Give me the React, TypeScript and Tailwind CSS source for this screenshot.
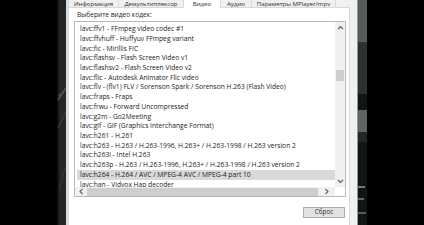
import React from 'react';

const codecs = [
  'lavc:ffv1 - FFmpeg video codec #1',
  'lavc:ffvhuff - Huffyuv FFmpeg variant',
  'lavc:fic - Mirillis FIC',
  'lavc:flashsv - Flash Screen Video v1',
  'lavc:flashsv2 - Flash Screen Video v2',
  'lavc:flic - Autodesk Animator Flic video',
  'lavc:flv - (flv1) FLV / Sorenson Spark / Sorenson H.263 (Flash Video)',
  'lavc:fraps - Fraps',
  'lavc:frwu - Forward Uncompressed',
  'lavc:g2m - Go2Meeting',
  'lavc:gif - GIF (Graphics Interchange Format)',
  'lavc:h261 - H.261',
  'lavc:h263 - H.263 / H.263-1996, H.263+ / H.263-1998 / H.263 version 2',
  'lavc:h263i - Intel H.263',
  'lavc:h263p - H.263 / H.263-1996, H.263+ / H.263-1998 / H.263 version 2',
  'lavc:h264 - H.264 / AVC / MPEG-4 AVC / MPEG-4 part 10',
  'lavc:han - Vidvox Hap decoder',
];

const selected = 'lavc:h264 - H.264 / AVC / MPEG-4 AVC / MPEG-4 part 10';

const tabs = [
  { label: 'Информация', w: 'w-[50px]' },
  { label: 'Демультиплексор', w: 'w-[65px]' },
  { label: 'Видео', w: 'w-[37px]', active: true },
  { label: 'Аудио', w: 'w-[31px]' },
  { label: 'Параметры MPlayer/mpv', w: 'w-[84px]' },
];

// кромка видеокадра по бокам диалога
const VideoEdge: React.FC<{ side: 'left' | 'right' }> = ({ side }) => (
  <svg width="9" height="225" className="shrink-0" viewBox="0 0 9 225">
    {side === 'left' ? (
      <>
        <rect width="9" height="225" fill="#262626" />
        <rect x="0" width="2" height="225" fill="#121212" />
        <path d="M1 100 L9 88" stroke="#555" strokeWidth="1.5" />
        <path d="M1 128 L9 112" stroke="#444" strokeWidth="1" />
        <path d="M2 190 L8 168" stroke="#383838" strokeWidth="1" />
        <circle cx="3" cy="95" r="1.5" fill="#505050" />
      </>
    ) : (
      <>
        <rect width="9" height="225" fill="#141414" />
        <rect width="9" height="42" fill="#5a5a5a" />
        <rect y="42" width="9" height="52" fill="#303030" />
        <rect y="110" width="9" height="22" fill="#626262" />
        <rect y="132" width="9" height="10" fill="#262626" />
        <rect y="186" width="7" height="2" fill="#777" />
        <rect y="198" width="6" height="2" fill="#666" />
        <rect y="212" width="8" height="2" fill="#5a5a5a" />
      </>
    )}
  </svg>
);

const Chevron: React.FC<{ dir: 'up' | 'down' | 'left' | 'right' }> = ({ dir }) => {
  const d = {
    up: 'M1 4 L3.5 1.5 L6 4',
    down: 'M1 2 L3.5 4.5 L6 2',
    left: 'M4.5 1 L2 3.5 L4.5 6',
    right: 'M2.5 1 L5 3.5 L2.5 6',
  }[dir];
  return (
    <svg width="7" height="7" viewBox="0 0 7 7">
      <path d={d} fill="none" stroke="#606060" strokeWidth="1.1" />
    </svg>
  );
};

const CodecList: React.FC = () => (
  <div className="flex h-[176px] w-[272px] flex-col border border-[#b9b9b9] bg-white">
    <div className="flex min-h-0 flex-1">
      <div className="min-w-0 flex-1 overflow-hidden pl-[2px] pt-[2.6px]">
        {codecs.map((c) => (
          <div
            key={c}
            className={`flex h-[9.73px] items-center whitespace-nowrap pl-[3px] text-[6.7px] leading-none text-[#1b1b1b] ${
              c === selected ? 'bg-[#d9d9d9]' : ''
            }`}
          >
            {c}
          </div>
        ))}
      </div>
      <div className="flex w-[10px] shrink-0 flex-col bg-[#f0f0f0]">
        <div className="flex h-[12px] items-center justify-center">
          <Chevron dir="up" />
        </div>
        <div className="mx-[1px] mt-[36px] h-[11px] bg-[#cdcdcd]" />
        <div className="flex-1" />
        <div className="flex h-[12px] items-center justify-center">
          <Chevron dir="down" />
        </div>
      </div>
    </div>
    <div className="flex h-[9px] shrink-0">
      <div className="flex flex-1 items-center bg-[#f0f0f0]">
        <div className="flex w-[12px] justify-center">
          <Chevron dir="left" />
        </div>
        <div className="h-[8px] w-[231px] bg-[#cdcdcd]" />
        <div className="flex flex-1 justify-center">
          <Chevron dir="right" />
        </div>
      </div>
      <div className="w-[10px] bg-white" />
    </div>
  </div>
);

const Dialog: React.FC = () => (
  <div className="flex w-[289px] shrink-0 flex-col bg-[#f0f0f0]">
    <div className="flex h-[8px] shrink-0">
      {tabs.map((t) => (
        <div
          key={t.label}
          className={`flex ${t.w} shrink-0 items-start justify-center whitespace-nowrap border-l border-[#d9d9d9] text-[6.1px] leading-[7px] text-[#2d2d2d] ${
            t.active ? 'bg-white' : 'border-b bg-[#f0f0f0]'
          }`}
        >
          {t.label}
        </div>
      ))}
      <div className="w-[15px] border-b border-l border-[#d9d9d9]" />
    </div>
    <div className="mr-[7px] flex flex-1 flex-col border-x border-[#d9d9d9] bg-white pl-[5px] pr-[3px] pt-[3px]">
      <div className="h-[8px] whitespace-nowrap pl-[3px] text-[6.6px] leading-[8px] text-[#1e1e1e]">
        Выберите видео кодек:
      </div>
      <div className="mt-[2px]">
        <CodecList />
      </div>
      <div className="mt-[10px] flex justify-end pr-[1px]">
        <button className="flex h-[11px] w-[42px] items-center justify-center border border-[#adadad] bg-[#e1e1e1] text-[6.3px] leading-none text-[#2d2d2d]">
          Сброс
        </button>
      </div>
    </div>
  </div>
);

export default function App() {
  return (
    <div className="flex h-[225px] w-[424px] overflow-hidden bg-black font-['Open_Sans',sans-serif]">
      <div className="w-[57px] shrink-0 bg-black" />
      <VideoEdge side="left" />
      <div className="w-[2px] shrink-0 bg-[#d3dde4]" />
      <Dialog />
      <div className="w-[1px] shrink-0 bg-[#7f9db3]" />
      <VideoEdge side="right" />
      <div className="flex-1 bg-black" />
    </div>
  );
}
